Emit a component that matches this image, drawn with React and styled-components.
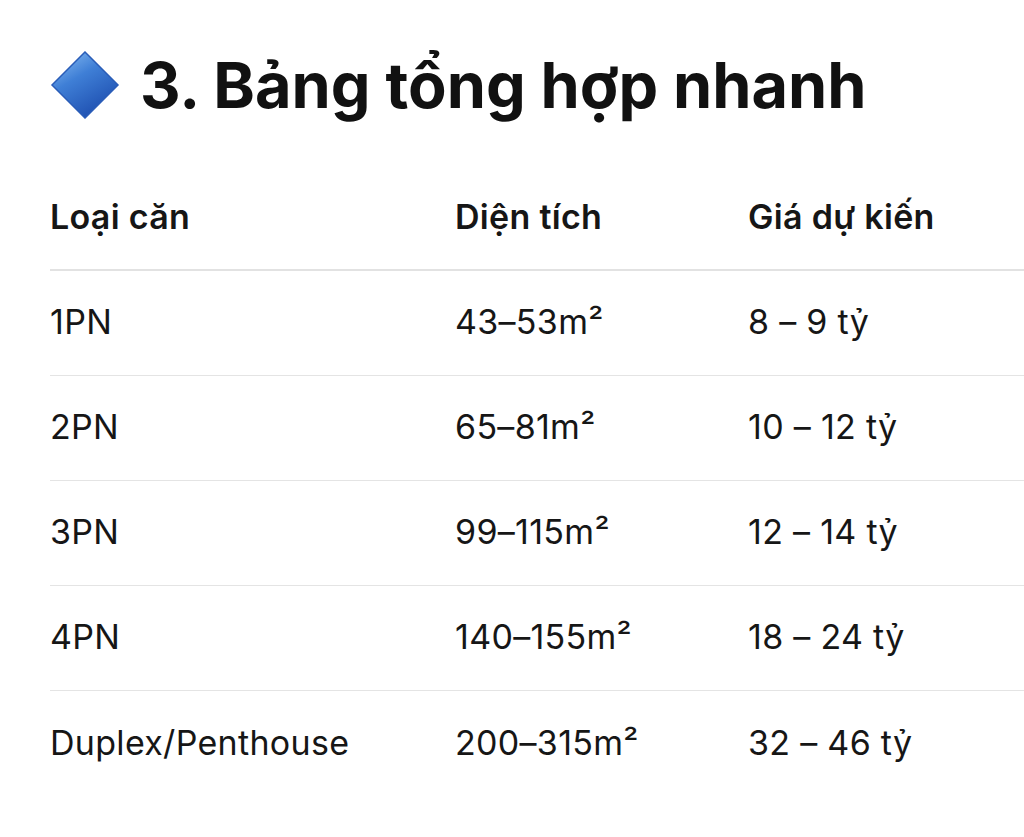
import React from 'react';
import styled, { createGlobalStyle } from 'styled-components';

const GlobalStyle = createGlobalStyle`
  html, body {
    margin: 0;
    padding: 0;
    background: #ffffff;
  }
  body {
    font-family: Inter, "Noto Sans", "Liberation Sans", sans-serif;
    color: #111111;
  }
`;

const Page = styled.div`
  width: 1024px;
  height: 837px;
  padding: 50px 0 0 50px;
  box-sizing: border-box;
  overflow: hidden;
`;

const Heading = styled.h1`
  display: flex;
  align-items: center;
  gap: 20px;
  margin: 0;
  height: 70px;
  font-size: 63px;
  font-weight: 700;
  letter-spacing: 0;
  color: #111111;
`;

const Table = styled.div`
  margin-top: 46px;
  display: grid;
  grid-template-columns: 405px 293px 1fr;
`;

const Cell = styled.div`
  height: 105px;
  display: flex;
  align-items: center;
  padding-bottom: 3px;
  box-sizing: border-box;
  font-size: 34px;
  letter-spacing: 0.3px;
  font-weight: ${(p) => (p.$head ? 600 : 400)};
  color: #161616;
  border-bottom: ${(p) => (p.$last ? 'none' : p.$head ? '2px solid #e2e2e2' : '1px solid #e4e4e4')};
`;

const Diamond = () => (
  <svg width="70" height="68" viewBox="0 0 70 68">
    <defs>
      <linearGradient id="dg" x1="0" y1="0" x2="0.6" y2="1">
        <stop offset="0" stopColor="#8fc2f5" />
        <stop offset="0.45" stopColor="#3f7fd6" />
        <stop offset="1" stopColor="#1e4fb0" />
      </linearGradient>
    </defs>
    <polygon points="35,1 68,34 35,67 2,34" fill="url(#dg)" stroke="#2a5db8" strokeWidth="1.5" />
  </svg>
);

const rows = [
  ['1PN', '43–53m²', '8 – 9 tỷ'],
  ['2PN', '65–81m²', '10 – 12 tỷ'],
  ['3PN', '99–115m²', '12 – 14 tỷ'],
  ['4PN', '140–155m²', '18 – 24 tỷ'],
  ['Duplex/Penthouse', '200–315m²', '32 – 46 tỷ'],
];

export default function App() {
  return (
    <Page>
      <GlobalStyle />
      <Heading>
        <Diamond />
        3. Bảng tổng hợp nhanh
      </Heading>
      <Table>
        {['Loại căn', 'Diện tích', 'Giá dự kiến'].map((h) => (
          <Cell key={h} $head>
            {h}
          </Cell>
        ))}
        {rows.map((r, i) =>
          r.map((c, j) => (
            <Cell key={i + '-' + j} $last={i === rows.length - 1}>
              {c}
            </Cell>
          ))
        )}
      </Table>
    </Page>
  );
}
